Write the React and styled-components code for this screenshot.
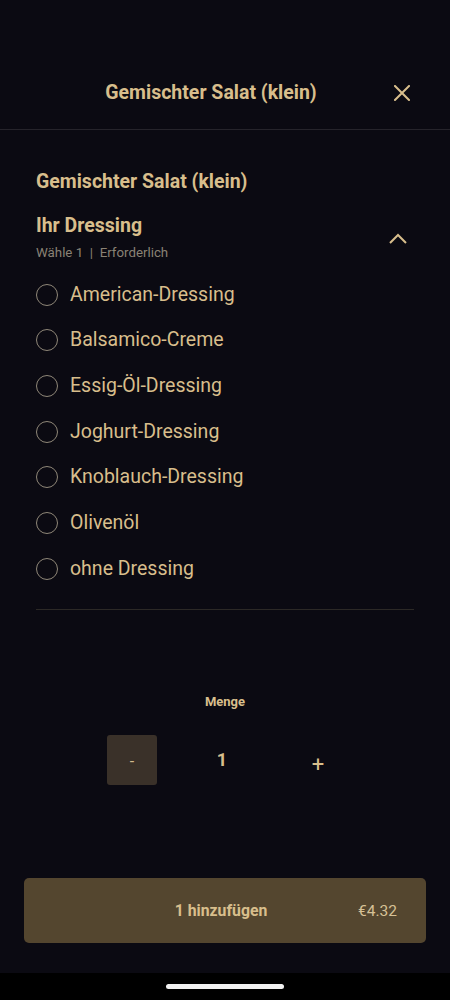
import React, { useState } from 'react';
import styled, { createGlobalStyle } from 'styled-components';

const gold = '#d8be8c';

const GlobalStyle = createGlobalStyle`
  html, body {
    margin: 0;
    padding: 0;
    background: #0b0a12;
  }
  * { box-sizing: border-box; }
  body {
    font-family: Roboto, "Liberation Sans", sans-serif;
    color: ${gold};
  }
`;

const dressings = [
  'American-Dressing',
  'Balsamico-Creme',
  'Essig-Öl-Dressing',
  'Joghurt-Dressing',
  'Knoblauch-Dressing',
  'Olivenöl',
  'ohne Dressing',
];

const App = () => {
  const [qty, setQty] = useState(1);
  const [picked, setPicked] = useState(null);

  return (
    <Page>
      <GlobalStyle />
      <StatusBar />
      <Header>
        <HeaderTitle>Gemischter Salat (klein)</HeaderTitle>
        <CloseButton aria-label="close">
          <svg width="16" height="16" viewBox="0 0 16 16">
            <path d="M1 1 L15 15 M15 1 L1 15" stroke={gold} strokeWidth="2" strokeLinecap="square" />
          </svg>
        </CloseButton>
      </Header>

      <Content>
        <ItemTitle>Gemischter Salat (klein)</ItemTitle>
        <GroupHead>
          <div>
            <GroupTitle>Ihr Dressing</GroupTitle>
            <GroupMeta>Wähle 1&nbsp;&nbsp;|&nbsp;&nbsp;Erforderlich</GroupMeta>
          </div>
          <Chevron>
            <svg width="18" height="11" viewBox="0 0 18 11">
              <path d="M1 10 L9 2 L17 10" fill="none" stroke={gold} strokeWidth="2" />
            </svg>
          </Chevron>
        </GroupHead>

        <OptionList>
          {dressings.map((d) => (
            <Option key={d} onClick={() => setPicked(d)}>
              <Radio checked={picked === d} />
              <OptionLabel>{d}</OptionLabel>
            </Option>
          ))}
        </OptionList>
        <Divider />

        <QtyLabel>Menge</QtyLabel>
        <Stepper>
          <MinusButton onClick={() => setQty(Math.max(1, qty - 1))}>-</MinusButton>
          <QtyValue>{qty}</QtyValue>
          <PlusButton onClick={() => setQty(qty + 1)}>+</PlusButton>
        </Stepper>
      </Content>

      <Footer>
        <AddButton>
          <span />
          <AddText>{qty} hinzufügen</AddText>
          <Price>€{(4.32 * qty).toFixed(2)}</Price>
        </AddButton>
      </Footer>
      <NavBar>
        <HomeIndicator />
      </NavBar>
    </Page>
  );
};

const Page = styled.div`
  width: 450px;
  height: 1000px;
  display: flex;
  flex-direction: column;
  background: #0b0a12;
  overflow: hidden;
`;

const StatusBar = styled.div`
  height: 50px;
  flex-shrink: 0;
`;

const Header = styled.div`
  height: 80px;
  flex-shrink: 0;
  display: flex;
  align-items: center;
  padding: 0 40px 0 28px;
  border-bottom: 1px solid #26242b;
`;

const HeaderTitle = styled.div`
  flex: 1;
  text-align: center;
  font-size: 19.5px;
  font-weight: 700;
  padding-top: 6px;
`;

const CloseButton = styled.button`
  width: 16px;
  height: 16px;
  padding: 0;
  border: none;
  background: none;
  display: flex;
  margin-top: 6px;
  cursor: pointer;
`;

const Content = styled.div`
  padding: 40px 36px 0;
  display: flex;
  flex-direction: column;
`;

const ItemTitle = styled.div`
  font-size: 19.5px;
  font-weight: 700;
  line-height: 24px;
`;

const GroupHead = styled.div`
  margin-top: 20px;
  display: flex;
  justify-content: space-between;
  align-items: center;
`;

const GroupTitle = styled.div`
  font-size: 19.5px;
  font-weight: 700;
  line-height: 24px;
`;

const GroupMeta = styled.div`
  margin-top: 7px;
  font-size: 13.3px;
  line-height: 16px;
  color: #8a8275;
`;

const Chevron = styled.div`
  display: flex;
  margin-right: 7px;
  margin-top: 2px;
`;

const OptionList = styled.div`
  margin-top: 11px;
  display: flex;
  flex-direction: column;
`;

const Option = styled.label`
  height: 45.67px;
  display: flex;
  align-items: center;
  gap: 12px;
  cursor: pointer;
`;

const Radio = styled.span`
  width: 22px;
  height: 22px;
  border-radius: 50%;
  border: 1px solid #8f8778;
  flex-shrink: 0;
  box-shadow: ${(p) => (p.checked ? `inset 0 0 0 5px #0b0a12, inset 0 0 0 11px ${gold}` : 'none')};
`;

const OptionLabel = styled.span`
  font-size: 19.5px;
  line-height: 24px;
`;

const Divider = styled.div`
  margin-top: 17px;
  height: 1px;
  background: #2c2926;
`;

const QtyLabel = styled.div`
  margin-top: 84px;
  text-align: center;
  font-size: 13px;
  font-weight: 700;
  line-height: 16px;
`;

const Stepper = styled.div`
  margin-top: 25px;
  display: flex;
  justify-content: center;
  align-items: center;
`;

const MinusButton = styled.button`
  width: 50px;
  height: 50px;
  border: none;
  border-radius: 3px;
  background: #3a3129;
  color: #d2ba8d;
  font-family: Roboto, "Liberation Sans", sans-serif;
  font-size: 16px;
  padding: 4px 0 0;
  cursor: pointer;
`;

const QtyValue = styled.div`
  width: 50px;
  margin-left: 40px;
  text-align: center;
  font-size: 18px;
  font-weight: 700;
  margin-top: 0;
`;

const PlusButton = styled.button`
  width: 50px;
  height: 50px;
  margin-left: 46px;
  border: none;
  background: none;
  color: ${gold};
  font-family: Roboto, "Liberation Sans", sans-serif;
  font-size: 22px;
  padding: 9px 0 0;
  cursor: pointer;
`;

const Footer = styled.div`
  margin-top: auto;
  padding: 0 24px 30px;
`;

const AddButton = styled.button`
  width: 100%;
  height: 65px;
  border: none;
  border-radius: 5px;
  background: #54462f;
  display: grid;
  grid-template-columns: 1fr auto 1fr;
  align-items: center;
  padding: 0 29px;
  font-family: Roboto, "Liberation Sans", sans-serif;
  cursor: pointer;
`;

const AddText = styled.span`
  font-size: 15.8px;
  font-weight: 700;
  color: ${gold};
  margin-right: 8px;
`;

const Price = styled.span`
  justify-self: end;
  font-size: 15.5px;
  color: #d6c196;
`;

const NavBar = styled.div`
  height: 27px;
  flex-shrink: 0;
  background: #000;
  display: flex;
  justify-content: center;
  padding-top: 11px;
`;

const HomeIndicator = styled.div`
  width: 118px;
  height: 5px;
  border-radius: 3px;
  background: #f2f2f2;
`;

export default App;
